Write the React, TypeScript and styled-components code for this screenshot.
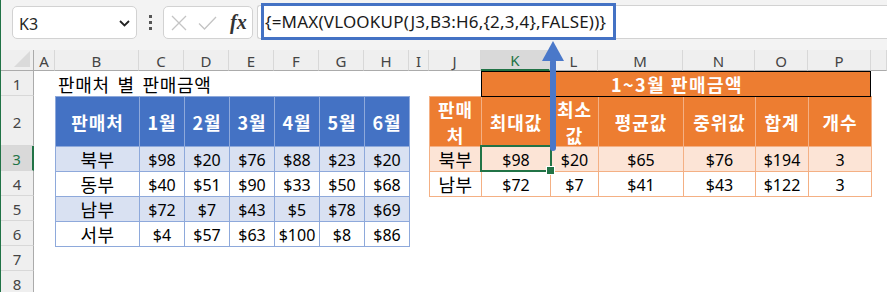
import React from 'react'
import styled, { createGlobalStyle } from 'styled-components'

const GlobalStyle = createGlobalStyle`
  html, body {
    margin: 0;
    padding: 0;
    background: #fff;
  }
  body {
    font-family: "Noto Sans", "Noto Sans CJK KR", sans-serif;
    overflow: hidden;
  }
  * {
    box-sizing: border-box;
  }
`

const GREEN = '#217346'
const BLUE = '#4472C4'
const ORANGE = '#ED7D31'

// column tracks: row header, A..P, then whatever is left of Q
const COLUMNS = [
  { name: '', w: 33 },
  { name: 'A', w: 21 },
  { name: 'B', w: 84 },
  { name: 'C', w: 45 },
  { name: 'D', w: 45 },
  { name: 'E', w: 45 },
  { name: 'F', w: 45 },
  { name: 'G', w: 45 },
  { name: 'H', w: 45 },
  { name: 'I', w: 20 },
  { name: 'J', w: 52 },
  { name: 'K', w: 69 },
  { name: 'L', w: 48 },
  { name: 'M', w: 85 },
  { name: 'N', w: 72 },
  { name: 'O', w: 53 },
  { name: 'P', w: 63 },
]

const ROW_HEIGHTS = [25, 50, 25, 25, 25, 25, 25, 25]

const Window = styled.div`
  position: relative;
  width: 887px;
  height: 292px;
  overflow: hidden;
  border-left: 1px solid ${GREEN};
  background: #f3f3f3;
`

const FormulaBar = styled.div`
  display: flex;
  align-items: flex-start;
  height: 50px;
  padding: 6px 0 0 11px;
`

const NameBox = styled.div`
  display: flex;
  align-items: center;
  justify-content: space-between;
  width: 125px;
  height: 33px;
  padding: 2px 6px 0 6px;
  background: #fff;
  border: 1px solid #d2d2d2;
  border-radius: 5px;
  font-size: 16px;
  color: #262626;
`

const Dots = styled.div`
  display: flex;
  flex-direction: column;
  align-items: center;
  justify-content: center;
  gap: 3px;
  width: 26px;
  height: 33px;

  span {
    width: 3px;
    height: 3px;
    background: #555;
  }
`

const ButtonBox = styled.div`
  display: flex;
  align-items: center;
  gap: 11px;
  width: 90px;
  height: 33px;
  padding-left: 7px;
  background: #fff;
  border: 1px solid #d2d2d2;
  border-radius: 5px;
`

const Fx = styled.span`
  margin-left: 2px;
  font-family: "Liberation Serif", serif;
  font-style: italic;
  font-weight: 700;
  font-size: 20px;
  color: #333;
`

const FormulaInput = styled.div`
  flex: 1;
  height: 34px;
  margin: -1px 0 0 4px;
  background: #fff;
  border-top: 1px solid #d2d2d2;
  border-bottom: 1px solid #d2d2d2;
  border-left: 1px solid #d2d2d2;
  border-radius: 3px 0 0 3px;
`

const FormulaText = styled.div`
  display: flex;
  align-items: center;
  width: 355px;
  height: 37px;
  margin: -3px 0 0 3px;
  padding: 0 0 1px 1px;
  border: 3px solid ${BLUE};
  font-size: 17px;
  letter-spacing: 0.2px;
  color: #1a1a1a;
  white-space: nowrap;
`

const Sheet = styled.div`
  display: grid;
  grid-template-columns: ${COLUMNS.map(c => c.w + 'px').join(' ')} 1fr;
  grid-template-rows: 21px ${ROW_HEIGHTS.map(h => h + 'px').join(' ')};
  background: #fff;
`

const Corner = styled.div`
  position: relative;
  background: #efefef;
  border-right: 1px solid #ababab;
  border-bottom: 1px solid #ababab;

  &::after {
    content: '';
    position: absolute;
    right: 3px;
    bottom: 3px;
    border-left: 16px solid transparent;
    border-bottom: 16px solid #dadada;
  }
`

const ColHead = styled.div<{ $active?: boolean }>`
  display: flex;
  align-items: center;
  justify-content: center;
  padding-top: 1px;
  background: ${p => (p.$active ? '#d9d9d9' : '#efefef')};
  border-right: 1px solid #d8d8d8;
  border-bottom: ${p => (p.$active ? `2px solid ${GREEN}` : '1px solid #ababab')};
  font-size: 15px;
  color: ${p => (p.$active ? GREEN : '#444')};
`

const RowHead = styled.div<{ $row: number; $active?: boolean }>`
  grid-column: 1;
  grid-row: ${p => p.$row};
  display: flex;
  align-items: center;
  justify-content: center;
  padding-top: 2px;
  background: ${p => (p.$active ? '#d9d9d9' : '#efefef')};
  border-bottom: 1px solid #d8d8d8;
  border-right: ${p => (p.$active ? `2px solid ${GREEN}` : '1px solid #ababab')};
  font-size: 15px;
  color: ${p => (p.$active ? GREEN : '#444')};
`

const Title = styled.div`
  grid-column: 3 / 10;
  grid-row: 2;
  display: flex;
  align-items: center;
  padding: 1px 0 0 3px;
  font-family: "Noto Sans CJK KR", sans-serif;
  font-size: 18px;
  letter-spacing: 0.7px;
  word-spacing: 3px;
  color: #000;
  white-space: nowrap;
`

const Table = styled.div<{ $area: string; $cols: string; $rows: string; $line: string }>`
  grid-area: ${p => p.$area};
  justify-self: start;
  align-self: start;
  display: grid;
  grid-template-columns: ${p => p.$cols};
  grid-template-rows: ${p => p.$rows};
  gap: 1px;
  padding: 1px;
  background: ${p => p.$line};
  z-index: 1;
`

type Kind = 'head' | 'name' | 'num'

const Cell = styled.div<{ $fill: string; $kind: Kind }>`
  display: flex;
  align-items: center;
  justify-content: center;
  text-align: center;
  padding: ${p => (p.$kind === 'num' ? '1px 0 0' : '0 2px')};
  background: ${p => p.$fill};
  color: ${p => (p.$kind === 'head' ? '#fff' : '#000')};
  font-family: ${p =>
    p.$kind === 'num' ? '"Noto Sans", sans-serif' : '"Noto Sans CJK KR", sans-serif'};
  font-size: ${p => (p.$kind === 'num' ? 16 : 18)}px;
  font-weight: ${p => (p.$kind === 'head' ? 700 : 400)};
  letter-spacing: ${p => (p.$kind === 'head' ? 1 : p.$kind === 'name' ? 0.5 : 0)}px;
  line-height: ${p => (p.$kind === 'head' ? '26px' : '20px')};
  white-space: ${p => (p.$kind === 'num' ? 'nowrap' : 'normal')};
`

const MergedTitle = styled.div`
  grid-column: 12 / 18;
  grid-row: 2;
  display: flex;
  align-items: center;
  justify-content: center;
  margin-bottom: -1px;
  padding-left: 2px;
  background: ${ORANGE};
  border: 1px solid #000;
  color: #fff;
  font-family: "Noto Sans CJK KR", sans-serif;
  font-weight: 700;
  font-size: 18px;
  letter-spacing: 1.5px;
  z-index: 2;
`

const Selection = styled.div`
  grid-column: 12;
  grid-row: 4;
  position: relative;
  margin: -1px -2px -1px -1px;
  border: 2px solid ${GREEN};
  z-index: 3;

  &::after {
    content: '';
    position: absolute;
    right: -5px;
    bottom: -5px;
    width: 7px;
    height: 7px;
    background: ${GREEN};
    border: 1px solid #fff;
  }
`

const Arrow = styled.svg`
  position: absolute;
  left: 541px;
  top: 41px;
  z-index: 10;
`

const leftHead = ['판매처', '1월', '2월', '3월', '4월', '5월', '6월']
const leftRows: [string, ...number[]][] = [
  ['북부', 98, 20, 76, 88, 23, 20],
  ['동부', 40, 51, 90, 33, 50, 68],
  ['남부', 72, 7, 43, 5, 78, 69],
  ['서부', 4, 57, 63, 100, 8, 86],
]

const rightHead = ['판매처', '최대값', '최소값', '평균값', '중위값', '합계', '개수']
const rightRows = [
  ['북부', '$98', '$20', '$65', '$76', '$194', '3'],
  ['남부', '$72', '$7', '$41', '$43', '$122', '3'],
]

export default function App() {
  return (
    <Window>
      <GlobalStyle />
      <FormulaBar>
        <NameBox>
          K3
          <svg width="11" height="7" viewBox="0 0 11 7">
            <path d="M1 1l4.5 4.5L10 1" fill="none" stroke="#222" strokeWidth="1.8" />
          </svg>
        </NameBox>
        <Dots>
          <span />
          <span />
          <span />
        </Dots>
        <ButtonBox>
          <svg width="16" height="16" viewBox="0 0 16 16">
            <path d="M1 1l14 14M15 1L1 15" stroke="#c4c4c4" strokeWidth="1.3" />
          </svg>
          <svg width="19" height="14" viewBox="0 0 19 14">
            <path d="M1 7.5l5.5 5.5L18 1" fill="none" stroke="#c4c4c4" strokeWidth="1.3" />
          </svg>
          <Fx>fx</Fx>
        </ButtonBox>
        <FormulaInput>
          <FormulaText>{'{=MAX(VLOOKUP(J3,B3:H6,{2,3,4},FALSE))}'}</FormulaText>
        </FormulaInput>
      </FormulaBar>

      <Sheet>
        <Corner />
        {COLUMNS.slice(1).map(c => (
          <ColHead key={c.name} $active={c.name === 'K'}>
            {c.name}
          </ColHead>
        ))}
        <ColHead />
        {ROW_HEIGHTS.map((_, i) => (
          <RowHead key={i} $row={i + 2} $active={i === 2}>
            {i + 1}
          </RowHead>
        ))}

        <Title>판매처 별 판매금액</Title>

        <Table
          $area="3 / 3 / 8 / 10"
          $cols="83px repeat(6, 44px)"
          $rows="49px repeat(4, 24px)"
          $line="#8EA9DB"
        >
          {leftHead.map(h => (
            <Cell key={h} $fill={BLUE} $kind="head">
              {h}
            </Cell>
          ))}
          {leftRows.map((row, r) =>
            row.map((v, c) => (
              <Cell
                key={`${r}-${c}`}
                $fill={r % 2 === 0 ? '#D9E1F2' : '#fff'}
                $kind={c === 0 ? 'name' : 'num'}
              >
                {c === 0 ? v : `$${v}`}
              </Cell>
            ))
          )}
        </Table>

        <Table
          $area="3 / 11 / 6 / 18"
          $cols="51px 68px 47px 84px 71px 52px 62px"
          $rows="49px 24px 24px"
          $line="#F4B084"
        >
          {rightHead.map(h => (
            <Cell key={h} $fill={ORANGE} $kind="head">
              {h}
            </Cell>
          ))}
          {rightRows.map((row, r) =>
            row.map((v, c) => (
              <Cell
                key={`${r}-${c}`}
                $fill={r === 0 ? '#FCE4D6' : '#fff'}
                $kind={c === 0 ? 'name' : 'num'}
              >
                {v}
              </Cell>
            ))
          )}
        </Table>

        <MergedTitle>1~3월 판매금액</MergedTitle>
        <Selection />
      </Sheet>

      <Arrow width="22" height="111" viewBox="0 0 22 111">
        <polygon points="11,0 22,20 0,20" fill="#4A78C9" />
        <rect x="8" y="18" width="6" height="92" rx="3" fill="#4A78C9" />
      </Arrow>
    </Window>
  )
}
